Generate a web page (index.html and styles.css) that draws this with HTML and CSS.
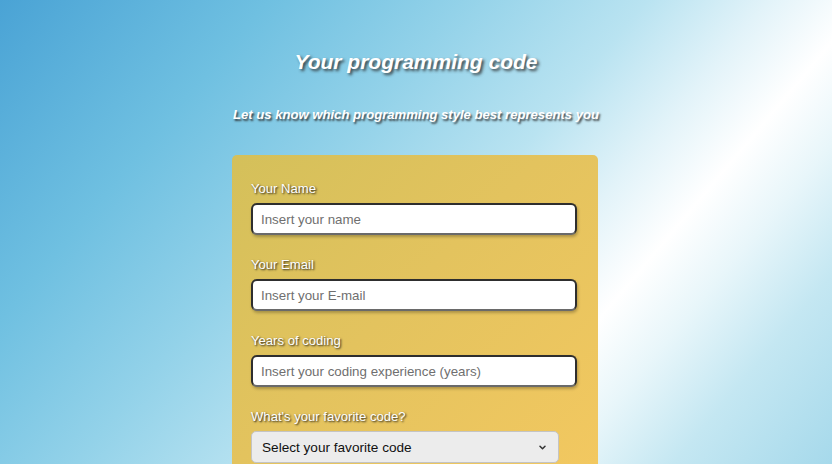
FILE: index.html
```html
<!DOCTYPE html>
<html lang="en">
<head>
<meta charset="utf-8">
<title>Your programming code</title>
<link rel="stylesheet" href="styles.css">
</head>
<body>
<main class="page">
  <h1 class="title">Your programming code</h1>
  <p class="subtitle">Let us know which programming style best represents you</p>
  <form class="card">
    <div class="field">
      <label class="label" for="name">Your Name</label>
      <input class="input" id="name" type="text" placeholder="Insert your name">
    </div>
    <div class="field">
      <label class="label" for="email">Your Email</label>
      <input class="input" id="email" type="email" placeholder="Insert your E-mail">
    </div>
    <div class="field">
      <label class="label" for="years">Years of coding</label>
      <input class="input" id="years" type="text" placeholder="Insert your coding experience (years)">
    </div>
    <div class="field">
      <label class="label" for="code">What's your favorite code?</label>
      <div class="select-wrap">
        <select class="select" id="code">
          <option>Select your favorite code</option>
        </select>
        <svg class="chevron" width="7" height="5" viewBox="0 0 7 5" aria-hidden="true"><path d="M1 1.2 L3.5 3.7 L6 1.2" fill="none" stroke="#333" stroke-width="1.5" stroke-linecap="round" stroke-linejoin="round"/></svg>
      </div>
    </div>
  </form>
</main>
</body>
</html>
```
FILE: styles.css
```css
html, body {
  margin: 0;
  padding: 0;
  height: 100%;
}
body {
  font-family: "Liberation Sans", Arial, sans-serif;
  overflow: hidden;
  background: linear-gradient(130deg, #4aa3d5 0%, #6fc0e1 22%, #93d2e9 38%, #b9e3f1 53%, #e2f3f9 63%, #ffffff 71%, #e8f6fa 78%, #c4e7f2 87%, #a6d9eb 100%);
}
.page {
  display: flex;
  flex-direction: column;
  align-items: center;
  padding-top: 50px;
}
.title {
  margin: 0;
  font-size: 21px;
  line-height: 24px;
  font-weight: bold;
  font-style: italic;
  color: #fff;
  text-shadow: 2px 2px 3px rgba(40, 40, 40, 0.85);
}
.subtitle {
  margin: 33px 0 0;
  font-size: 13.1px;
  line-height: 16px;
  font-weight: bold;
  font-style: italic;
  color: #fff;
  text-shadow: 1.5px 1.5px 2px rgba(40, 40, 40, 0.85);
}
.card {
  margin-top: 32px;
  margin-right: 2px;
  width: 366px;
  box-sizing: border-box;
  padding: 26px 21px 20px 19px;
  border-radius: 5px;
  background: linear-gradient(135deg, #d4c05a 0%, #e3c35e 45%, #f3c860 100%);
  display: flex;
  flex-direction: column;
  gap: 22px;
}
.field {
  display: flex;
  flex-direction: column;
  align-items: flex-start;
  gap: 6px;
}
.label {
  font-size: 13.1px;
  line-height: 16px;
  color: #fff;
  text-shadow: 1px 1px 2px rgba(20, 20, 20, 0.95);
}
.input {
  width: 326px;
  height: 32px;
  box-sizing: border-box;
  border: 2px solid #2e2e2e;
  border-bottom-color: #6a6a6a;
  border-radius: 6px;
  background: #fff;
  padding: 0 8px;
  font-family: "Liberation Sans", Arial, sans-serif;
  font-size: 13.33px;
  color: #222;
  box-shadow: 1px 2px 3px rgba(0, 0, 0, 0.25);
  outline: none;
}
.input::placeholder {
  color: #6f6f6f;
}
.select-wrap {
  position: relative;
  width: 308px;
}
.select {
  appearance: none;
  -webkit-appearance: none;
  width: 308px;
  height: 32px;
  box-sizing: border-box;
  border: 1px solid #c4c4c4;
  border-radius: 5px;
  background: #ececec;
  padding: 0 10px;
  font-family: "Liberation Sans", Arial, sans-serif;
  font-size: 13.6px;
  color: #111;
  display: block;
}
.chevron {
  position: absolute;
  right: 13px;
  top: 14px;
  pointer-events: none;
}
```
